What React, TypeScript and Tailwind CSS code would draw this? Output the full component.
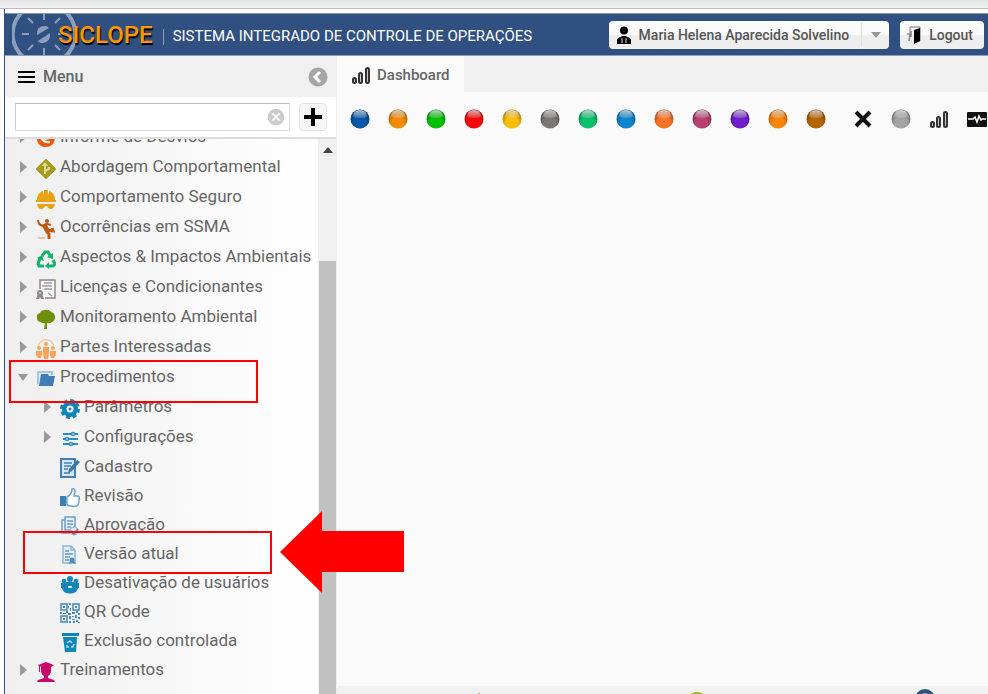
import { ReactNode } from "react";
import { MdCancel } from "react-icons/md";

type IconProps = { children: ReactNode; color?: string };

const TreeIcon = ({ children, color }: IconProps) => (
  <svg viewBox="0 0 20 20" className="block size-5" fill={color} aria-hidden="true">
    {children}
  </svg>
);

const WhistleIcon = () => (
  <TreeIcon color="#e8590c">
    <path d="M1 1q1 3 0 6-1 9 7 11 9 1 11-8 0-5-2-8-1 9-8 9Q4 10 4 3Z" />
    <path d="M7 3q0 8 8 7l1-3-3-2-2 1-2-3Z" />
    <path d="M5 9q3 5 9 4" fill="none" stroke="#fff" strokeWidth="2" />
  </TreeIcon>
);

const SignIcon = () => (
  <TreeIcon color="#a49c1c">
    <path d="M10 1 19 10 10 19 1 10Z" stroke="#a49c1c" strokeWidth="2" strokeLinejoin="round" />
    <path d="M9 15V6M9 12l4-2V8" fill="none" stroke="#dcd99a" strokeWidth="2" />
    <path d="m6 7 3-4 3 4Z" fill="#dcd99a" />
  </TreeIcon>
);

const HelmetIcon = () => (
  <TreeIcon color="#e8a213">
    <path d="M1 11q0-7 6-9l1 5V1h4v6l1-5q6 2 6 9Z" />
    <path d="M0 11h20v2H0ZM1 15h18l-1 3q-1 2-3 2h-1q-2 0-3-3H9q-1 3-3 3H5q-2 0-3-2Z" />
  </TreeIcon>
);

const FallIcon = () => (
  <TreeIcon color="#bd5a12">
    <circle cx="11" cy="2" r="2" />
    <path
      d="M2 1l1 4 4 2 4-2 4 1M7 7l3 5"
      fill="none"
      stroke="#bd5a12"
      strokeWidth="2"
      strokeLinejoin="round"
    />
    <path d="m6 6 4-2 3 6-3 3Z" />
    <path d="m10 11 7 1-1-3M10 12l3 3v5" fill="none" stroke="#bd5a12" strokeWidth="3" />
    <path d="M1 18h8v2H3Z" fill="#e6c4aa" />
  </TreeIcon>
);

const RecycleIcon = () => (
  <TreeIcon color="#10b368">
    <path d="m6 7 3-4h3l3 5M4 9l-2 6 1 2h5M17 11l2 4-2 2h-5" fill="none" stroke="#10b368" strokeWidth="3" />
    <path d="m11 8 6 2V4ZM1 9l5-3 2 6ZM13 13v7l-4-3Z" />
  </TreeIcon>
);

const LicenseIcon = () => (
  <TreeIcon color="none">
    <path d="M4 10V1h15v18H9" fill="#f7f5f6" stroke="#8f858a" strokeWidth="1.5" />
    <path d="M8 4h8M6 7h10M8 10h8M12 14l4 3" stroke="#a59ca0" strokeWidth="1.5" />
    <circle cx="4" cy="14" r="3" fill="#91868b" />
    <path d="m2 15-2 5h3l1-2 1 2h3l-2-5Z" fill="#91868b" />
    <circle cx="4" cy="14" r="1" fill="#ddd" />
  </TreeIcon>
);

const OakIcon = () => (
  <TreeIcon color="#6d8f0b">
    <path d="M9 14q-3 1-4-1-4 0-4-4-1-4 3-5 1-3 5-3 4-1 6 2 4 1 4 5 0 4-3 5-2 2-5 1v6H8Z" />
  </TreeIcon>
);

const PartnersIcon = () => (
  <TreeIcon color="#f9a35a">
    <path d="M2 6q8-11 16 0" fill="none" stroke="#f9c79e" strokeWidth="1.5" />
    <circle cx="10" cy="5" r="2" />
    <circle cx="3" cy="9" r="2" />
    <circle cx="17" cy="9" r="2" />
    <path d="M7 8h6v7l-1 5H8l-1-5ZM0 12h6v4l-1 3H2l-2-3ZM14 12h6v4l-2 3h-3l-1-3Z" />
  </TreeIcon>
);

const FolderIcon = () => (
  <TreeIcon color="#3e7db5">
    <path d="M2 15V3h14v3" fill="#e1edf6" stroke="#91b8d7" strokeWidth="1.5" />
    <path d="M5 5h7l1 2h6l-2 10H3Z" />
  </TreeIcon>
);

const GearIcon = () => (
  <TreeIcon color="#0e84b8">
    <circle cx="10" cy="10" r="8" />
    <circle cx="10" cy="10" r="8" fill="none" stroke="#0e84b8" strokeWidth="4" strokeDasharray="3.6 2.683" />
    <circle cx="10" cy="10" r="2.5" fill="none" stroke="#fff" strokeWidth="2" />
  </TreeIcon>
);

const SlidersIcon = () => (
  <TreeIcon color="#fff">
    <path d="M3 5h15M3 10h15M3 15h15" stroke="#2b8fbd" strokeWidth="2" />
    <g stroke="#2b8fbd" strokeWidth="1.5">
      <circle cx="13" cy="5" r="1.5" />
      <circle cx="7" cy="10" r="1.5" />
      <circle cx="11" cy="15" r="1.5" />
    </g>
  </TreeIcon>
);

const FormIcon = () => (
  <TreeIcon color="none">
    <path d="M1 1h14v18H1Z" fill="#d7e6f2" stroke="#4381b5" strokeWidth="2" />
    <path d="M4 5h8M4 8h7M4 11h4M4 15h6" stroke="#4381b5" strokeWidth="1.5" />
    <path d="m8 15 1-4 8-9 3 2-8 9Z" fill="#3577b0" />
  </TreeIcon>
);

const ThumbIcon = () => (
  <TreeIcon color="none">
    <path d="M0 9h6v10H0Z" fill="#3c7eb8" />
    <path
      d="M7 10q5-3 5-8 3-1 3 2 0 2-1 5h4q2 1 1 3 0 5-2 7-5 1-10-1Z"
      fill="#fff"
      stroke="#6fa2cd"
      strokeWidth="1.5"
    />
  </TreeIcon>
);

const ApprovalIcon = () => (
  <TreeIcon color="none">
    <path d="M5 1h10v13H5Z" fill="#e5eef6" stroke="#6c9ec7" strokeWidth="1.5" />
    <path d="M5 4H2v13h12" stroke="#6c9ec7" strokeWidth="1.5" />
    <path d="M7 5h6M7 8h6M7 11h4" stroke="#6c9ec7" strokeWidth="1.5" />
    <circle cx="14" cy="15" r="4" fill="#dbe8f3" stroke="#8fb6d6" />
    <path d="m11 15 3 3 4-5" stroke="#4e8abd" strokeWidth="2" />
  </TreeIcon>
);

const VersionIcon = () => (
  <TreeIcon color="none">
    <path d="M3 1h8l4 4v13H3Z" fill="#e5eef6" stroke="#8fb6d6" strokeWidth="1.5" />
    <path d="M11 1v4h4" stroke="#8fb6d6" strokeWidth="1.5" />
    <path d="M5 6h4M5 9h8M5 12h5M5 15h4" stroke="#5f97c5" strokeWidth="1.5" />
    <circle cx="12" cy="15" r="2.5" fill="#4e8abd" />
    <path d="m10 16-1 3 3-1 4 1-2-3Z" fill="#4e8abd" />
  </TreeIcon>
);

const UsersIcon = () => (
  <TreeIcon color="#1585b8">
    <circle cx="10" cy="5" r="3" />
    <circle cx="4" cy="7" r="2.3" />
    <circle cx="16" cy="7" r="2.3" />
    <circle cx="6" cy="11" r="2.5" />
    <circle cx="14" cy="11" r="2.5" />
    <path d="M6 8h8v4H6ZM1 9h5v5H1ZM14 9h5v5h-5ZM2 14q4-3 7 0h2q4-3 7 0l-2 4q-6 3-12 0Z" />
  </TreeIcon>
);

const QrIcon = () => (
  <TreeIcon color="#4687ba">
    <path d="M1 1h6v6H1ZM13 1h6v6h-6ZM1 13h6v6H1Z" fill="none" stroke="#4687ba" strokeWidth="1.5" />
    <path d="M3 3h2v2H3ZM15 3h2v2h-2ZM3 15h2v2H3ZM9 0h2v2H9ZM8 3h1v2H8ZM10 5h1v3h-1Z" />
    <path d="M0 9h2v2H0ZM3 10h3v1H3ZM6 8h2v2H6ZM8 10h3v2H8ZM12 9h3v2h-3ZM16 8h2v2h-2ZM18 10h2v2h-2Z" />
    <path d="M9 13h2v3H9ZM12 13h2v1h-2ZM15 12h2v3h-2ZM18 14h2v2h-2ZM12 16h3v1h-3ZM9 18h2v2H9ZM13 18h2v2h-2ZM16 17h2v2h-2ZM18 19h2v1h-2Z" />
  </TreeIcon>
);

const BinIcon = () => (
  <TreeIcon color="#0f86b8">
    <path d="M2 1h17v3H2ZM3 5h14l-1 15H5Z" />
    <path d="m7 11 3-2 2 2M14 12l-1 3h-2M9 15H7v-2" fill="none" stroke="#b6dbea" strokeWidth="1.5" />
  </TreeIcon>
);

const GraduateIcon = () => (
  <TreeIcon color="#c9086b">
    <path d="m2 3 8-3 8 3-3 2v5q-1 3-3 4v2l6 2 1 2H1l1-2 6-2v-2q-2-1-3-4V5L4 4v6H3V4Z" />
  </TreeIcon>
);

const BarsIcon = () => (
  <svg viewBox="0 0 20 20" className="block size-5" fill="#ccc" stroke="#333" strokeWidth="2" aria-hidden="true">
    <rect x="2" y="13" width="3" height="5" rx="1.5" />
    <rect x="8" y="8" width="3" height="10" rx="1.5" />
    <rect x="15" y="3" width="3" height="15" rx="1.5" />
  </svg>
);

type Node = { label: string; icon: ReactNode; branch?: boolean; children?: Node[] };

const menu: Node[] = [
  { label: "Informe de Desvios", icon: <WhistleIcon />, branch: true },
  { label: "Abordagem Comportamental", icon: <SignIcon />, branch: true },
  { label: "Comportamento Seguro", icon: <HelmetIcon />, branch: true },
  { label: "Ocorrências em SSMA", icon: <FallIcon />, branch: true },
  { label: "Aspectos & Impactos Ambientais", icon: <RecycleIcon />, branch: true },
  { label: "Licenças e Condicionantes", icon: <LicenseIcon />, branch: true },
  { label: "Monitoramento Ambiental", icon: <OakIcon />, branch: true },
  { label: "Partes Interessadas", icon: <PartnersIcon />, branch: true },
  {
    label: "Procedimentos",
    icon: <FolderIcon />,
    branch: true,
    children: [
      { label: "Parâmetros", icon: <GearIcon />, branch: true },
      { label: "Configurações", icon: <SlidersIcon />, branch: true },
      { label: "Cadastro", icon: <FormIcon /> },
      { label: "Revisão", icon: <ThumbIcon /> },
      { label: "Aprovação", icon: <ApprovalIcon /> },
      { label: "Versão atual", icon: <VersionIcon /> },
      { label: "Desativação de usuários", icon: <UsersIcon /> },
      { label: "QR Code", icon: <QrIcon /> },
      { label: "Exclusão controlada", icon: <BinIcon /> },
    ],
  },
  { label: "Treinamentos", icon: <GraduateIcon />, branch: true },
];

const balls = [
  "#0a56a8",
  "#f28c05",
  "#05c005",
  "#f90505",
  "#fbbd05",
  "#7d7676",
  "#08c26c",
  "#0d84cc",
  "#fb7327",
  "#b8416f",
  "#7020c8",
  "#f98409",
  "#b56403",
];

const Ball = ({ color }: { color: string }) => (
  <svg viewBox="0 0 20 20" className="block size-5" aria-hidden="true">
    <defs>
      <linearGradient id="shine" x1="0" y1="0" x2="0" y2="1">
        <stop offset="0" stopColor="#fff" stopOpacity="0.7" />
        <stop offset="1" stopColor="#fff" stopOpacity="0.15" />
      </linearGradient>
      <radialGradient id="shade" cx="0.5" cy="0.7" r="0.6">
        <stop offset="0.5" stopColor="#000" stopOpacity="0" />
        <stop offset="1" stopColor="#000" stopOpacity="0.3" />
      </radialGradient>
    </defs>
    <circle cx="10" cy="10" r="9.5" fill={color} />
    <circle cx="10" cy="10" r="9.5" fill="url(#shade)" />
    <path d="M3 8Q3 1 10 1t7 7q-7 2-14 0Z" fill="url(#shine)" />
  </svg>
);

const Tree = ({ nodes, nested }: { nodes: Node[]; nested?: boolean }) => (
  <ul className={nested ? "pl-6" : "-mt-[17px]"}>
    {nodes.map((node) => (
      <li key={node.label}>
        <button
          type="button"
          className={`flex w-full items-center pl-[13px] text-left whitespace-nowrap ${
            node.branch ? "h-[30px]" : "h-[29px]"
          }`}
        >
          <span className="w-[10px]">
            {node.branch && (
              <svg viewBox="0 0 10 12" className="block h-3 w-[10px]" fill="#999" aria-hidden="true">
                <path d={node.children ? "M0 3h10l-5 7Z" : "M2 0l7 6-7 6Z"} />
              </svg>
            )}
          </span>
          <span className="mt-[3px] ml-2">{node.icon}</span>
          <span className="ml-1">{node.label}</span>
        </button>
        {node.children && <Tree nodes={node.children} nested />}
      </li>
    ))}
  </ul>
);

const Header = () => (
  <header className="relative flex h-[43px] shrink-0 items-center overflow-hidden border-t border-b border-t-[#8595ae] border-b-[#8fa0bc] bg-[#2f5080] pr-1">
    <svg viewBox="0 0 64 64" className="absolute -top-3 left-[7px] size-16" fill="none" stroke="#8d9fbc" aria-hidden="true">
      <path d="M23 3A30 30 0 0 0 23 61M41 3A30 30 0 0 1 41 61" strokeWidth="4" />
      <path
        d="M32 10v8M32 46v8M10 32h7M46 32h8M16 16l5 5M43 43l5 5M16 48l5-5M43 21l5-5"
        strokeWidth="2"
      />
      <path d="M25 33q-1-9 8-9 3 0 4 2ZM38 31q1 9-7 10-4 0-5-2Z" fill="#8d9fbc" stroke="none" />
    </svg>
    <h1 className="relative ml-[53px] text-2xl font-medium text-[#ff9800] [text-shadow:1px_2px_1px_#000]">
      SICLOPE
    </h1>
    <p className="mt-1 ml-[10px] flex items-center gap-[9px] text-[15px] whitespace-nowrap text-white">
      <span className="h-4 w-px bg-[#8d9fbc]" />
      SISTEMA INTEGRADO DE CONTROLE DE OPERAÇÕES
    </p>
    <div className="ml-auto flex gap-[11px] text-sm font-medium whitespace-nowrap text-[#555]">
      <button
        type="button"
        className="flex h-7 items-center rounded-sm bg-linear-to-b from-[#fafafa] from-50% to-[#eee] to-50% pl-[7px]"
      >
        <svg viewBox="0 0 16 18" className="h-[18px] w-4" aria-hidden="true">
          <circle cx="8" cy="4.5" r="4" />
          <path d="M1 18v-4q0-2 4-3l1-1h4l1 1q4 1 4 3v4Z" />
          <path d="M6 12v5M10 12v5" stroke="#ddd" />
        </svg>
        <span className="mr-3 ml-[7px]">Maria Helena Aparecida Solvelino</span>
        <span className="flex h-6 w-7 items-center justify-center border-l border-[#ddd]">
          <svg viewBox="0 0 10 6" className="h-[6px] w-[10px]" fill="#999" aria-hidden="true">
            <path d="M0 0h10L5 6Z" />
          </svg>
        </span>
      </button>
      <button
        type="button"
        className="flex h-7 items-center gap-2 rounded-sm bg-linear-to-b from-[#fafafa] from-50% to-[#eee] to-50% px-[7px] pr-[11px]"
      >
        <svg viewBox="0 0 14 18" className="h-[18px] w-[14px]" aria-hidden="true">
          <path d="M3 7V1h10v14h-3" fill="none" stroke="#777" />
          <path d="m7 4 6-2v13l-6 3Z" />
          <path d="M0 8h5M4 5v6M3 8l-1 7" fill="none" stroke="#888" strokeWidth="1.5" />
        </svg>
        Logout
      </button>
    </div>
  </header>
);

const Sidebar = () => (
  <aside className="flex w-[332px] shrink-0 flex-col border-r border-[#eee]">
    <div className="flex h-[41px] shrink-0 items-center bg-[#f0f0f0] pr-[8px] pl-[13px]">
      <svg viewBox="0 0 17 12" className="h-3 w-[17px]" aria-hidden="true">
        <path d="M0 0h17v2H0ZM0 5h17v2H0ZM0 10h17v2H0Z" />
      </svg>
      <h2 className="ml-2 text-base font-medium text-[#666]">Menu</h2>
      <button type="button" aria-label="Recolher" className="ml-auto">
        <svg viewBox="0 0 20 20" className="block size-5" aria-hidden="true">
          <circle cx="10" cy="10" r="9.5" fill="#a6a6a6" />
          <path d="m12 5-5 5 5 5" fill="none" stroke="#fff" strokeWidth="3" />
        </svg>
      </button>
    </div>
    <div className="flex h-[42px] shrink-0 items-center gap-[9px] border-b-2 border-[#ddd] bg-white pr-[9px] pl-[10px]">
      <div className="relative flex-1">
        <input
          type="text"
          aria-label="Pesquisar"
          className="block h-7 w-full border border-t-[#bbb] border-r-[#ddd] border-b-[#ddd] border-l-[#ccc] bg-white px-2"
        />
        <button type="button" aria-label="Limpar" className="absolute top-1 right-1">
          <MdCancel className="size-5 text-[#ccc]" />
        </button>
      </div>
      <button
        type="button"
        aria-label="Adicionar"
        className="flex size-7 items-center justify-center rounded-sm border border-[#e4e4e4] bg-[#f6f6f6]"
      >
        <svg viewBox="0 0 20 20" className="size-5" aria-hidden="true">
          <path d="M8 1h4v7h7v4h-7v7H8v-7H1V8h7Z" />
        </svg>
      </button>
    </div>
    <div className="flex min-h-0 flex-1">
      <nav className="min-w-0 flex-1 overflow-hidden bg-linear-to-r from-[#efefef] to-white text-[17px] text-[#666]">
        <Tree nodes={menu} />
      </nav>
      <div className="flex w-[18px] flex-col bg-[#f1f1f1] pl-px">
        <svg viewBox="0 0 10 6" className="mt-2 mb-[108px] h-[6px] w-[10px] shrink-0 self-center" fill="#444" aria-hidden="true">
          <path d="M0 6h10L5 0Z" />
        </svg>
        <div className="flex-1 bg-[#c1c1c1]" />
      </div>
    </div>
  </aside>
);

const Dashboard = () => (
  <main className="flex min-w-0 flex-1 flex-col bg-[#fafafa]">
    <div className="flex h-9 shrink-0 bg-[#f0f0f0]">
      <button
        type="button"
        className="flex items-center gap-[6px] bg-[#fafafa] px-[14px] pt-[2px] text-[15px] font-medium text-[#666]"
      >
        <BarsIcon />
        Dashboard
      </button>
    </div>
    <div className="flex gap-[18px] overflow-hidden pt-[17px] pb-4 pl-[13px]">
      {balls.map((color) => (
        <button type="button" key={color} className="shrink-0" aria-label="Indicador">
          <Ball color={color} />
        </button>
      ))}
      <button type="button" className="ml-[9px] shrink-0" aria-label="Fechar">
        <svg viewBox="0 0 20 20" className="block size-5" aria-hidden="true">
          <path d="m3 3 14 14M17 3 3 17" stroke="#111" strokeWidth="4" />
        </svg>
      </button>
      <button type="button" className="shrink-0" aria-label="Inativo">
        <Ball color="#a3a3a3" />
      </button>
      <button type="button" className="shrink-0" aria-label="Gráfico">
        <BarsIcon />
      </button>
      <button type="button" className="shrink-0" aria-label="Monitor">
        <svg viewBox="0 0 20 20" className="block size-5" aria-hidden="true">
          <rect x="0" y="3" width="20" height="15" rx="1" fill="#111" />
          <path d="M1 10h5l2-2 2 5 2-6 2 4 1-1h4" fill="none" stroke="#fff" strokeWidth="1.5" />
        </svg>
      </button>
    </div>
    <footer className="mt-auto h-2 overflow-hidden bg-[#f1f1f1]">
      <svg viewBox="0 0 651 8" className="block h-2 w-full" preserveAspectRatio="xMinYMin slice" aria-hidden="true">
        <path d="m140 8 3-2v2Z" fill="#e5b77c" />
        <circle cx="360" cy="17" r="11" fill="#9cb71b" />
        <circle cx="588" cy="13" r="8" fill="#8fa3c4" stroke="#2f5080" strokeWidth="4" />
      </svg>
    </footer>
  </main>
);

export default function App() {
  return (
    <div className="relative flex h-screen flex-col overflow-hidden bg-white font-[Roboto,sans-serif] text-base">
      <div className="h-[9px] shrink-0 border-b border-[#bbb] bg-linear-to-b from-[#e4e4e4] to-[#f0f0f0]" />
      <div className="ml-1 flex min-h-0 flex-1 flex-col border-l border-[#2f5080] pt-1">
        <Header />
        <div className="flex min-h-0 flex-1">
          <Sidebar />
          <Dashboard />
        </div>
      </div>

      {/* callouts over the tree */}
      <div className="pointer-events-none absolute top-[360px] left-[9px] h-[43px] w-[249px] border-2 border-[#f00]" />
      <div className="pointer-events-none absolute top-[531px] left-[23px] h-[43px] w-[249px] border-2 border-[#f00]" />
      <svg
        viewBox="0 0 124 82"
        className="pointer-events-none absolute top-[511px] left-[280px] h-[82px] w-[124px]"
        fill="#f00"
        aria-hidden="true"
      >
        <path d="M0 41 42 0v20h82v41H42v21Z" />
      </svg>
    </div>
  );
}
